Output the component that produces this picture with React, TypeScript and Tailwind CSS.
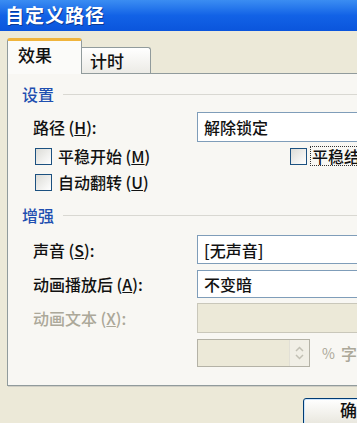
import React from "react";

const font = { fontFamily: '"Noto Sans CJK SC", "Noto Sans", sans-serif' };

function GroupHeader({ title }: { title: string }) {
  return (
    <div className="flex items-center h-[20px] pl-[14px]">
      <span className="text-[16px] leading-none font-medium text-[#1f4fb0]">{title}</span>
      <div className="flex-1 ml-[9px] h-px bg-[#d9d8d2]" />
    </div>
  );
}

function Label({ text, k, disabled }: { text: string; k: string; disabled?: boolean }) {
  return (
    <div
      className={
        "w-[164px] shrink-0 text-[16px] leading-none font-medium whitespace-nowrap " +
        (disabled ? "text-[#aca899]" : "text-[#111]")
      }
    >
      {text} (<u>{k}</u>):
    </div>
  );
}

function Combo({ value, h, disabled }: { value?: string; h: string; disabled?: boolean }) {
  return (
    <div
      className={
        "w-[200px] flex items-center pl-[6px] border text-[16px] leading-none font-medium text-[#111] " +
        h +
        (disabled ? " bg-[#ece9d8] border-[#c9c7ba]" : " bg-white border-[#7f9db9]")
      }
    >
      {value}
    </div>
  );
}

function Box() {
  return <div className="w-[17px] h-[17px] shrink-0 border border-[#1c5180] bg-gradient-to-br from-[#dcdcd7] to-white" />;
}

function Check({ label, k }: { label: string; k: string }) {
  return (
    <div className="flex items-center gap-[6px]">
      <Box />
      <span className="text-[16px] leading-none font-medium text-[#111] whitespace-nowrap">
        {label} (<u>{k}</u>)
      </span>
    </div>
  );
}

export default function App() {
  return (
    <div className="w-[357px] h-[423px] overflow-hidden bg-[#ece9d8]" style={font}>
      {/* title bar */}
      <div className="h-[31px] flex items-center pl-[5px] bg-gradient-to-b from-[#3b8df2] via-[#1262e6] to-[#0a55dc]">
        <span className="text-[19px] font-bold text-white tracking-[1px] [text-shadow:1px_1px_0_#0b3a96]">
          自定义路径
        </span>
      </div>

      <div className="pl-[7px] pt-[7px]">
        {/* tabs */}
        <div className="flex items-end h-[35px]">
          <div className="relative z-10 w-[75px] h-[36px] -mb-px bg-[#fbfbf9] border-x border-[#919b9c] rounded-t-[3px] border-t-[3px] border-t-[#f0b43c] pl-[10px] pt-[5px] text-[17px] leading-none font-medium text-[#111]">
            效果
          </div>
          <div className="w-[69px] h-[26px] bg-gradient-to-b from-white to-[#ecebe6] border-t border-r border-[#919b9c] rounded-tr-[3px] pl-[8px] pt-[4px] text-[17px] leading-none font-medium text-[#111]">
            计时
          </div>
        </div>

        {/* panel */}
        <div className="w-[420px] h-[313px] border border-[#919b9c] bg-[#f8f7f3] shadow-[1px_1px_0_#d0cec4]">
          <div className="mt-[10px]">
            <GroupHeader title="设置" />
          </div>
          <div className="mt-[8px] flex items-center pl-[25px]">
            <Label text="路径" k="H" />
            <Combo value="解除锁定" h="h-[30px]" />
          </div>
          <div className="mt-[4px] flex items-center h-[20px] pl-[27px]">
            <div className="w-[255px]">
              <Check label="平稳开始" k="M" />
            </div>
            <div className="flex items-center gap-[3px]">
              <Box />
              <span className="text-[16px] leading-none font-medium text-[#111] whitespace-nowrap border border-dotted border-[#333] px-px py-[1px]">
                平稳结束 (<u>N</u>)
              </span>
            </div>
          </div>
          <div className="mt-[6px] flex items-center h-[20px] pl-[27px]">
            <Check label="自动翻转" k="U" />
          </div>

          <div className="mt-[13px]">
            <GroupHeader title="增强" />
          </div>
          <div className="mt-[10px] flex items-center pl-[25px]">
            <Label text="声音" k="S" />
            <Combo value="[无声音]" h="h-[29px]" />
          </div>
          <div className="mt-[6px] flex items-center pl-[25px]">
            <Label text="动画播放后" k="A" />
            <Combo value="不变暗" h="h-[28px]" />
          </div>
          <div className="mt-[5px] flex items-center pl-[25px]">
            <Label text="动画文本" k="X" disabled />
            <Combo h="h-[30px]" disabled />
          </div>
          <div className="mt-[6px] flex items-center pl-[189px]">
            <div className="w-[113px] h-[28px] shrink-0 flex border border-[#b4b2a6] bg-[#ece9d8]">
              <div className="flex-1" />
              <div className="w-[20px] flex flex-col items-center justify-center gap-[2px] bg-[#f1efe6] border-l border-[#e2e0d6]">
                <svg width="9" height="6" viewBox="0 0 9 6">
                  <path d="M1 5 L4.5 1.5 L8 5" stroke="#c2c0b4" strokeWidth="1.5" fill="none" />
                </svg>
                <svg width="9" height="6" viewBox="0 0 9 6">
                  <path d="M1 1 L4.5 4.5 L8 1" stroke="#c2c0b4" strokeWidth="1.5" fill="none" />
                </svg>
              </div>
            </div>
            <span className="ml-[12px] text-[14px] text-[#aca899]">%</span>
            <span className="ml-[6px] text-[16px] font-medium text-[#aca899] whitespace-nowrap">字符之间延迟</span>
          </div>
        </div>

        {/* buttons */}
        <div className="mt-[12px] pl-[296px]">
          <div className="w-[80px] h-[30px] rounded-[3px] border border-[#003c74] bg-gradient-to-b from-white to-[#e6e4da] shadow-[inset_0_0_0_1px_#cde4fb] pl-[36px] pt-[2px] text-[17px] leading-none font-medium text-[#111] whitespace-nowrap">
            确定
          </div>
        </div>
      </div>
    </div>
  );
}
